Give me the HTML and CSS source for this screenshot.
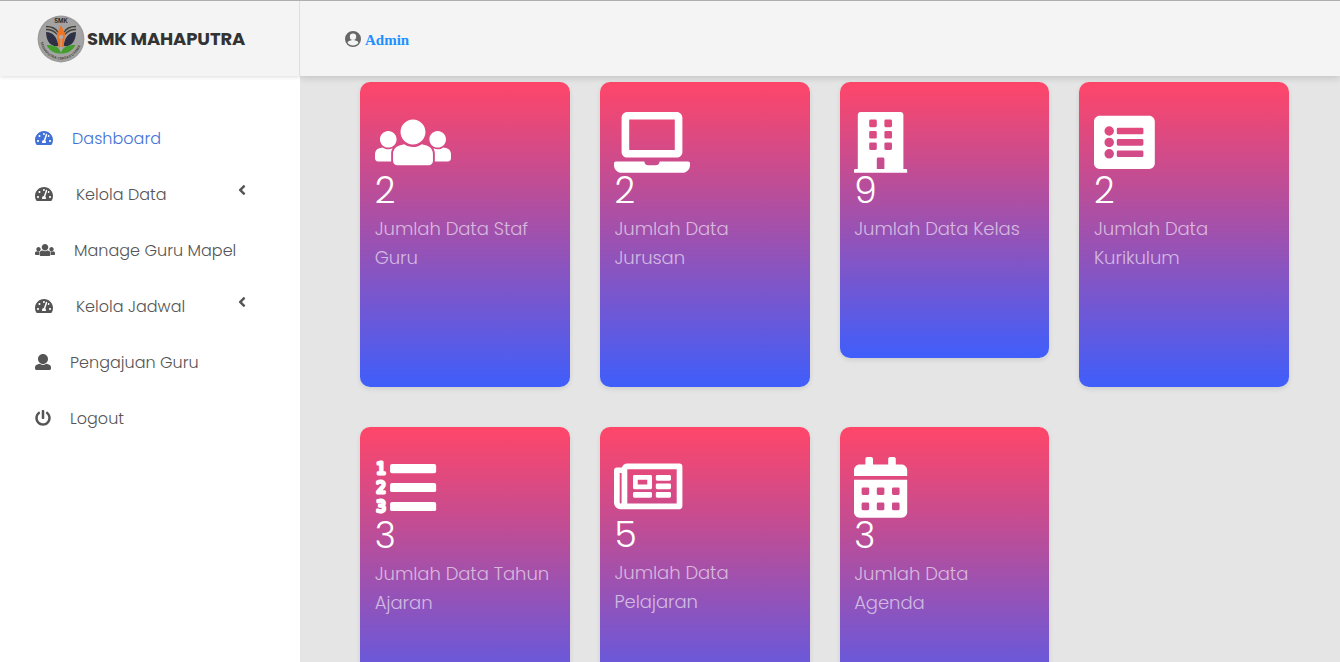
FILE: index.html
```html
<!DOCTYPE html>
<html lang="id">
<head>
<meta charset="utf-8">
<title>SMK Mahaputra</title>
<link rel="stylesheet" href="styles.css">
</head>
<body>
<svg class="defs" aria-hidden="true">
  <symbol id="gauge" viewBox="0 0 576 512"><path d="M288 32C128.94 32 0 160.94 0 320c0 52.8 14.25 102.26 39.06 144.8 5.61 9.62 16.3 15.2 27.44 15.2h443c11.14 0 21.83-5.58 27.44-15.2C561.75 422.26 576 372.8 576 320c0-159.06-128.94-288-288-288zm0 64c14.71 0 26.58 10.13 30.32 23.65-1.11 2.26-2.64 4.23-3.45 6.67l-9.22 27.67c-5.13 3.49-10.97 6.01-17.64 6.01-17.67 0-32-14.33-32-32S270.33 96 288 96zM96 384c-17.67 0-32-14.33-32-32s14.33-32 32-32 32 14.33 32 32-14.33 32-32 32zm48-160c-17.67 0-32-14.33-32-32s14.33-32 32-32 32 14.33 32 32-14.33 32-32 32zm246.77-72.41l-61.33 184C343.13 347.33 352 364.54 352 384c0 11.72-3.38 22.55-8.88 32H232.88c-5.5-9.45-8.88-20.28-8.88-32 0-33.94 26.5-61.43 59.9-63.59l61.34-184.01c4.17-12.56 17.73-19.45 30.36-15.17 12.57 4.19 19.35 17.79 15.17 30.36zm14.66 57.2l15.52-46.55c3.47-1.29 7.13-2.23 11.05-2.23 17.67 0 32 14.33 32 32s-14.33 32-32 32c-11.38-.01-20.89-6.28-26.57-15.22zM480 384c-17.67 0-32-14.33-32-32s14.33-32 32-32 32 14.33 32 32-14.33 32-32 32z"/></symbol>
  <symbol id="users" viewBox="0 0 640 512"><path d="M320 64c57.99 0 105 47.01 105 105s-47.01 105-105 105-105-47.01-105-105S262.01 64 320 64zm113.463 217.366l-39.982-9.996c-49.168 35.365-108.766 27.473-146.961 0l-39.982 9.996C174.485 289.379 152 318.177 152 351.216V412c0 19.882 16.118 36 36 36h264c19.882 0 36-16.118 36-36v-60.784c0-33.039-22.485-61.837-54.537-69.85zM528 300c38.66 0 70-31.34 70-70s-31.34-70-70-70-70 31.34-70 70 31.34 70 70 70zm-416 0c38.66 0 70-31.34 70-70s-31.34-70-70-70-70 31.34-70 70 31.34 70 70 70zm24 112v-60.784c0-16.551 4.593-32.204 12.703-45.599-29.988 14.72-63.336 8.708-85.69-7.37l-26.655 6.664C14.99 310.252 0 329.452 0 351.477V392c0 13.255 10.745 24 24 24h112.169a52.417 52.417 0 0 1-.169-4zm467.642-107.09l-26.655-6.664c-27.925 20.086-60.89 19.233-85.786 7.218C499.369 318.893 504 334.601 504 351.216V412c0 1.347-.068 2.678-.169 4H616c13.255 0 24-10.745 24-24v-40.523c0-22.025-14.99-41.225-36.358-46.567z"/></symbol>
  <symbol id="angle" viewBox="0 0 256 512"><path d="M31.7 239l136-136c9.4-9.4 24.6-9.4 33.9 0l22.6 22.6c9.4 9.4 9.4 24.6 0 33.9L127.9 256l96.4 96.4c9.4 9.4 9.4 24.6 0 33.9L201.700 409c-9.4 9.4-24.6 9.400-33.900 0l-136-136c-9.500-9.400-9.500-24.600-.1-34z"/></symbol>
</svg>
<div class="app">
  <aside class="sidebar">
    <div class="brand">
      <svg class="logo" viewBox="0 0 48 48">
        <circle cx="24" cy="24" r="23.4" fill="#9b9b9b"/>
        <circle cx="24" cy="24" r="22" fill="#a3a3a3"/>
        <text x="24" y="8.400" class="logo-top">SMK</text>
        <path id="ring" d="M3.700 27.500A20.600 20.600 0 0 0 44.300 27.500" fill="none"/>
        <text class="logo-ring"><textPath href="#ring" textLength="54">MAHAPUTRA CERDAS UTAMA</textPath></text>
        <g fill="none" stroke="#44413a" stroke-width="1.300"><path d="M9 11.500c6 0 10 2 12 6M9 14.500c5 0 9 2 11 5M39 11.500c-6 0-10 2-12 6M39 14.500c-5 0-9 2-11 5"/></g>
        <path d="M9 17c7 0 11 5 12.500 14-7 1-12-3-12.500-14zM39 17c-7 0-11 5-12.500 14 7 1 12-3 12.500-14z" fill="#2e3145"/>
        <path d="M9.500 30c8 0 13 2 14.500 8 1.500-6 6.500-8 14.500-8-3 6-8 8.500-14.500 8.500S12.500 36 9.500 30z" fill="#439c2c"/>
        <path d="M24 10l4.200 9-1.700 13h-5l-1.700-13z" fill="#ed7325"/><circle cx="24" cy="22" r="2.200" fill="#b4a6a0"/><path d="M24 24v12" stroke="#b4b4b4"/>
      </svg>
      <span class="brand-name">SMK MAHAPUTRA</span>
    </div>
    <nav class="menu">
      <a class="item active"><svg class="ico w18"><use href="#gauge"/></svg><span>Dashboard</span></a>
      <a class="item"><svg class="ico w18"><use href="#gauge"/></svg><span>Kelola Data</span><svg class="angle"><use href="#angle"/></svg></a>
      <a class="item"><svg class="ico w20"><use href="#users"/></svg><span>Manage Guru Mapel</span></a>
      <a class="item"><svg class="ico w18"><use href="#gauge"/></svg><span>Kelola Jadwal</span><svg class="angle"><use href="#angle"/></svg></a>
      <a class="item"><svg class="ico w16" viewBox="0 0 512 512"><path d="M256 0c88.366 0 160 71.634 160 160s-71.634 160-160 160S96 248.366 96 160 167.634 0 256 0zm183.283 333.821l-71.313-17.828c-74.923 53.89-165.738 41.864-223.94 0l-71.313 17.828C29.981 344.505 0 382.903 0 426.955V464c0 26.51 21.49 48 48 48h416c26.51 0 48-21.49 48-48v-37.045c0-44.052-29.981-82.45-72.717-93.134z"/></svg><span>Pengajuan Guru</span></a>
      <a class="item"><svg class="ico w16" viewBox="0 0 512 512"><path d="M400 54.1c63 45 104 118.6 104 201.9 0 136.8-110.8 247.7-247.5 248C120 504.3 8.2 393 8 256.4 7.9 173.1 48.9 99.3 111.8 54.2c11.7-8.3 28-4.8 35 7.7L162.6 90c5.9 10.5 3.1 23.8-6.6 31-41.5 30.8-68 79.6-68 134.9-.1 92.3 74.5 168.1 168 168.1 91.6 0 168.6-74.2 168-169.1-.3-51.8-24.7-101.8-68.1-134-9.7-7.2-12.4-20.5-6.5-30.9l15.8-28.1c7-12.4 23.2-16.1 34.8-7.8zM296 264V24c0-13.3-10.7-24-24-24h-32c-13.3 0-24 10.7-24 24v240c0 13.3 10.7 24 24 24h32c13.3 0 24-10.7 24-24z"/></svg><span>Logout</span></a>
    </nav>
  </aside>
  <div class="content">
    <header class="topbar">
      <svg class="account" viewBox="0 0 20 20"><path fill-rule="evenodd" d="M10 0a10 10 0 1 0 0 20a10 10 0 0 0 0-20zM10 3.200a4 4 0 1 1 0 8a4 4 0 0 1 0-8zM10 18.200c-3 0-5.200-1.200-6.800-3.400c.1-2.200 4.500-3.500 6.800-3.500s6.700 1.300 6.800 3.500c-1.600 2.200-3.800 3.400-6.800 3.400z"/></svg>
      <a class="user">Admin</a>
    </header>
    <main class="cards">
      <section class="card"><svg class="pic" viewBox="0 0 640 512"><use href="#users"/></svg><div class="num">2</div><p class="label">Jumlah Data Staf Guru</p></section>
      <section class="card"><svg class="pic" viewBox="0 0 640 512"><path fill-rule="evenodd" d="M112 0h416c26.500 0 48 21.500 48 48v288c0 26.500-21.500 48-48 48H112c-26.500 0-48-21.500-48-48V48c0-26.500 21.500-48 48-48zM128 64v256h384V64zM16 416h240c0 18 14 32 32 32h64c18 0 32-14 32-32h240c8.800 0 16 7.200 16 16v16c0 35.200-28.800 64-64 64H64c-35.200 0-64-28.800-64-64v-16c0-8.800 7.200-16 16-16z"/></svg><div class="num">2</div><p class="label">Jumlah Data Jurusan</p></section>
      <section class="card"><svg class="pic" viewBox="0 0 448 512"><path fill-rule="evenodd" d="M436 480h-20V24c0-13.255-10.745-24-24-24H56C42.745 0 32 10.745 32 24v456H12c-6.627 0-12 5.373-12 12v20h448v-20c0-6.627-5.373-12-12-12zM140 64h40q12 0 12 12v40q0 12-12 12h-40q-12 0-12-12V76q0-12 12-12zm128 0h40q12 0 12 12v40q0 12-12 12h-40q-12 0-12-12V76q0-12 12-12zm-128 96h40q12 0 12 12v40q0 12-12 12h-40q-12 0-12-12v-40q0-12 12-12zm128 0h40q12 0 12 12v40q0 12-12 12h-40q-12 0-12-12v-40q0-12 12-12zm-128 96h40q12 0 12 12v40q0 12-12 12h-40q-12 0-12-12v-40q0-12 12-12zm128 0h40q12 0 12 12v40q0 12-12 12h-40q-12 0-12-12v-40q0-12 12-12zM204 384h40q12 0 12 12v84h-64v-84q0-12 12-12z"/></svg><div class="num">9</div><p class="label">Jumlah Data Kelas</p></section>
      <section class="card"><svg class="pic" viewBox="0 0 512 512"><path fill-rule="evenodd" d="M464 480H48c-26.51 0-48-21.49-48-48V80c0-26.51 21.49-48 48-48h416c26.51 0 48 21.49 48 48v352c0 26.51-21.49 48-48 48zM128 120a40 40 0 1 0 0 80a40 40 0 0 0 0-80zm0 96a40 40 0 1 0 0 80a40 40 0 0 0 0-80zm0 96a40 40 0 1 0 0 80a40 40 0 0 0 0-80zM204 132h200q12 0 12 12v32q0 12-12 12H204q-12 0-12-12v-32q0-12 12-12zm0 96h200q12 0 12 12v32q0 12-12 12H204q-12 0-12-12v-32q0-12 12-12zm0 96h200q12 0 12 12v32q0 12-12 12H204q-12 0-12-12v-32q0-12 12-12z"/></svg><div class="num">2</div><p class="label">Jumlah Data Kurikulum</p></section>
      <section class="card"><svg class="pic" viewBox="0 0 512 512"><rect x="127" y="60" width="388" height="76" rx="16"/><rect x="127" y="219" width="388" height="76" rx="16"/><rect x="127" y="379" width="388" height="76" rx="16"/><g class="ol"><text x="10" y="147" textLength="82" lengthAdjust="spacingAndGlyphs">1</text><text x="10" y="307" textLength="82" lengthAdjust="spacingAndGlyphs">2</text><text x="10" y="465" textLength="82" lengthAdjust="spacingAndGlyphs">3</text></g></svg><div class="num">3</div><p class="label">Jumlah Data Tahun Ajaran</p></section>
      <section class="card raised"><svg class="pic" viewBox="0 0 576 512"><path d="M552 64H112c-20.858 0-38.643 13.377-45.248 32H24c-13.255 0-24 10.745-24 24v272c0 30.928 25.072 56 56 56h496c13.255 0 24-10.745 24-24V88c0-13.255-10.745-24-24-24zM48 392V144h16v248c0 4.411-3.589 8-8 8s-8-3.589-8-8zm480 8H111.422c.374-2.614.578-5.283.578-8V112h416v288zM172 280h136c6.627 0 12-5.373 12-12v-96c0-6.627-5.373-12-12-12H172c-6.627 0-12 5.373-12 12v96c0 6.627 5.373 12 12 12zm28-80h80v40h-80v-40zm-40 140v-24c0-6.627 5.373-12 12-12h136c6.627 0 12 5.373 12 12v24c0 6.627-5.373 12-12 12H172c-6.627 0-12-5.373-12-12zm192 0v-24c0-6.627 5.373-12 12-12h104c6.627 0 12 5.373 12 12v24c0 6.627-5.373 12-12 12H364c-6.627 0-12-5.373-12-12zm0-144v-24c0-6.627 5.373-12 12-12h104c6.627 0 12 5.373 12 12v24c0 6.627-5.373 12-12 12H364c-6.627 0-12-5.373-12-12zm0 72v-24c0-6.627 5.373-12 12-12h104c6.627 0 12 5.373 12 12v24c0 6.627-5.373 12-12 12H364c-6.627 0-12-5.373-12-12z"/></svg><div class="num">5</div><p class="label">Jumlah Data Pelajaran</p></section>
      <section class="card"><svg class="pic" viewBox="0 0 448 512"><path fill-rule="evenodd" d="M400 64h-48V16c0-8.800-7.200-16-16-16h-32c-8.800 0-16 7.200-16 16v48H160V16c0-8.800-7.200-16-16-16h-32c-8.800 0-16 7.200-16 16v48H48C21.500 64 0 85.500 0 112v48h448v-48c0-26.500-21.500-48-48-48zM0 192h448v272c0 26.500-21.500 48-48 48H48c-26.500 0-48-21.500-48-48zM76 256h40q12 0 12 12v40q0 12-12 12H76q-12 0-12-12v-40q0-12 12-12zm128 0h40q12 0 12 12v40q0 12-12 12h-40q-12 0-12-12v-40q0-12 12-12zm128 0h40q12 0 12 12v40q0 12-12 12h-40q-12 0-12-12v-40q0-12 12-12zM76 384h40q12 0 12 12v40q0 12-12 12H76q-12 0-12-12v-40q0-12 12-12zm128 0h40q12 0 12 12v40q0 12-12 12h-40q-12 0-12-12v-40q0-12 12-12zm128 0h40q12 0 12 12v40q0 12-12 12h-40q-12 0-12-12v-40q0-12 12-12z"/></svg><div class="num">3</div><p class="label">Jumlah Data Agenda</p></section>
    </main>
  </div>
</div>
</body>
</html>
```
FILE: styles.css
```css
* { box-sizing: border-box; }
body { margin: 0; font-family: Poppins, Inter, "Open Sans", sans-serif; color: #555; background: #e5e5e5; }
.defs { display: none; }
svg { display: block; fill: currentColor; flex: none; overflow: visible; }
.app { display: flex; height: 662px; overflow: hidden; border-top: 1px solid #aeaeae; }
.sidebar { width: 300px; flex: none; background: #fff; }
.brand { height: 75px; display: flex; align-items: center; padding-left: 37px; background: #f4f4f4; border-right: 1px solid #dedede; box-shadow: 0 1px 4px rgba(0,0,0,.14); }
.logo { width: 48px; height: 48px; }
.logo-top { font: 600 6px Inter, sans-serif; text-anchor: middle; fill: #222; }
.logo-ring { font: 700 3.400px Inter, sans-serif; fill: #4c4636; }
.brand-name { font-size: 18px; font-weight: 700; color: #333; margin-left: 2px; letter-spacing: -.12px; }
.menu { padding-top: 34px; }
.item { height: 56px; display: flex; align-items: center; padding-left: 35px; font-size: 16px; font-weight: 300; letter-spacing: .02px; }
.item.active { color: #4272d7; }
.ico { height: 16px; }
.w16 { width: 16px; margin-right: 19px; }
.w18 { width: 18px; margin-right: 23px; }
.active .w18 { margin-right: 19px; }
.w20 { width: 20px; margin-right: 19px; }
.angle { width: 8px; height: 16px; margin: -9px 54px 0 auto; }
.content { flex: 1; display: flex; flex-direction: column; min-width: 0; }
.topbar { height: 75px; flex: none; display: flex; align-items: center; padding-left: 45px; background: #f4f4f4; box-shadow: 0 2px 7px rgba(0,0,0,.15); clip-path: inset(0 0 -12px 0); }
.account { width: 16px; height: 16px; color: #666; }
.user { font: bold 15px "Liberation Serif", serif; color: #1e90ff; margin: 4px 0 0 4px; }
.cards { display: grid; grid-template-columns: repeat(4, 209.750px); gap: 40px 30px; align-items: start; padding: 6px 0 0 60px; }
.card { padding: 30px 14.700px 114.500px; border-radius: 10px; background: linear-gradient(to bottom, #ff4669 0%, #be4d96 34%, #3f5efb 100%); box-shadow: 0 2px 5px rgba(0,0,0,.1); color: #fff; }
.pic { height: 60.800px; }
.ol text { font: 134px "DejaVu Sans", sans-serif; stroke: #fff; stroke-width: 25px; stroke-linejoin: round; }
.num { height: 42.200px; line-height: 36px; font-size: 36px; font-weight: 300; }
.label { margin: 0; font-size: 18px; line-height: 28.800px; font-weight: 300; letter-spacing: -.06px; color: rgba(255,255,255,.6); }
.raised { padding-bottom: 115.500px; }
.raised .pic { margin: -1px 0 0; }
```
